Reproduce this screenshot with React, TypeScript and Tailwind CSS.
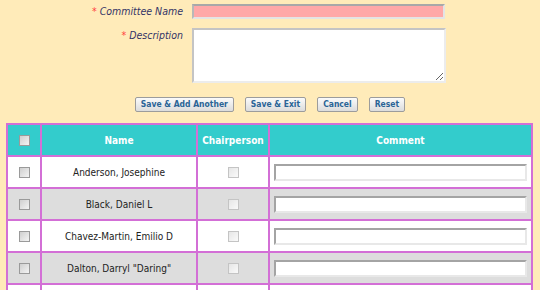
import React from 'react'

const members = [
  { name: 'Anderson, Josephine', shade: false },
  { name: 'Black, Daniel L', shade: true },
  { name: 'Chavez-Martin, Emilio D', shade: false },
  { name: 'Dalton, Darryl "Daring"', shade: true },
  { name: '', shade: false },
]

const Box = ({ faded }: { faded?: boolean }) => (
  <span
    className={
      faded
        ? 'inline-block w-[11px] h-[11px] border border-[#c4c4c4] bg-gradient-to-br from-[#e6e6e6] to-[#fafafa] align-middle'
        : 'inline-block w-[11px] h-[11px] border border-[#9a9a9a] bg-gradient-to-br from-[#cfcfcf] to-[#f4f4f4] align-middle'
    }
  />
)

const Btn = ({ label }: { label: string }) => (
  <button
    type="button"
    className="h-[15px] px-[5px] rounded-[2px] border border-[#9c9c9c] bg-gradient-to-b from-[#fbfbfb] to-[#dcdcdc] text-[8.5px] leading-[13px] font-bold text-[#2a6496]"
  >
    {label}
  </button>
)

export default function App() {
  return (
    <div className="w-[540px] h-[290px] overflow-hidden bg-[#ffebb9] font-['DejaVu_Sans_Condensed','DejaVu_Sans','Liberation_Sans',sans-serif]">
      <div className="pt-[4px]">
        <div className="flex items-center">
          <label className="w-[183px] text-right text-[10.5px] leading-[13px] italic text-[#333366]">
            <span className="text-[#ff4040] not-italic">*</span> Committee Name
          </label>
          <input
            type="text"
            className="ml-[9px] w-[253px] h-[15px] bg-[#ffa8a8] border-2 border-t-[#a8a8a8] border-l-[#b8b8b8] border-r-[#e4e4e4] border-b-[#e4e4e4] outline-none"
          />
        </div>
        <div className="flex items-start mt-[9px]">
          <label className="w-[183px] text-right text-[10.5px] leading-[13px] italic text-[#333366] pt-[1px]">
            <span className="text-[#ff4040] not-italic">*</span> Description
          </label>
          <textarea className="ml-[9px] w-[254px] h-[55px] bg-white border-2 border-t-[#c4c4c4] border-l-[#c4c4c4] border-r-[#ececec] border-b-[#ececec] outline-none" />
        </div>
      </div>

      <div className="flex justify-center gap-[11px] mt-[14px]">
        <Btn label="Save & Add Another" />
        <Btn label="Save & Exit" />
        <Btn label="Cancel" />
        <Btn label="Reset" />
      </div>

      <table className="mt-[11px] ml-[6px] w-[527px] table-fixed border-collapse border-2 border-[#d36fd6] text-[10px]">
        <colgroup>
          <col className="w-[34px]" />
          <col className="w-[156px]" />
          <col className="w-[72px]" />
          <col />
        </colgroup>
        <thead>
          <tr className="bg-[#33cccc] text-white font-bold">
            <th className="h-[32px] border-2 border-[#d36fd6] text-center"><Box /></th>
            <th className="border-2 border-[#d36fd6]">Name</th>
            <th className="border-2 border-[#d36fd6]">Chairperson</th>
            <th className="border-2 border-[#d36fd6]">Comment</th>
          </tr>
        </thead>
        <tbody>
          {members.map((m, i) => (
            <tr key={i} className={m.shade ? 'bg-[#dddddd]' : 'bg-white'}>
              <td className="h-[32px] border-2 border-[#d36fd6] text-center"><Box /></td>
              <td className="border-2 border-[#d36fd6] text-center text-[#222]">{m.name}</td>
              <td className="border-2 border-[#d36fd6] text-center"><Box faded /></td>
              <td className="border-2 border-[#d36fd6] px-[4px]">
                <input
                  type="text"
                  className="block w-full h-[17px] bg-white border-2 border-t-[#a4a4a4] border-l-[#a4a4a4] border-r-[#e8e8e8] border-b-[#e8e8e8] outline-none"
                />
              </td>
            </tr>
          ))}
        </tbody>
      </table>
    </div>
  )
}
